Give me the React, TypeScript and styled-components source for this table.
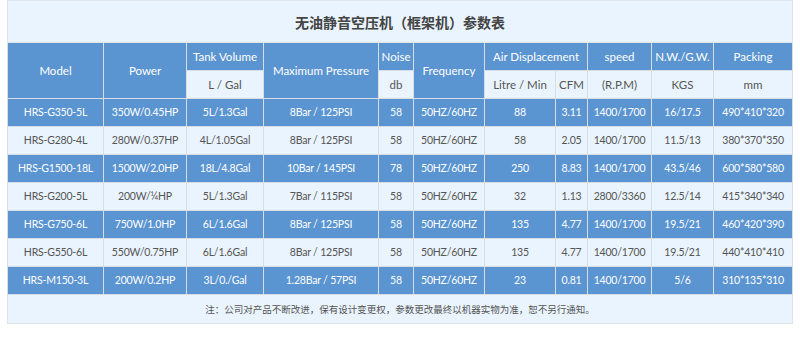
import React from "react";
import styled, { createGlobalStyle } from "styled-components";

const Global = createGlobalStyle`
  html, body { margin: 0; padding: 0; background: #fff; }
  body { font-family: Lato, "Noto Sans CJK SC", sans-serif; }
`;

const Wrap = styled.div`
  padding: 0 8px 0 7px;
`;

const Table = styled.table`
  width: 785px;
  border-collapse: collapse;
  table-layout: fixed;
  background: #eaf4fe;
  border: 1px solid #dfe4ea;
`;

const Title = styled.th`
  height: 41px;
  padding: 0;
  font-family: "Noto Sans CJK SC", sans-serif;
  font-size: 14px;
  font-weight: 700;
  color: #444;
  background: #eaf4fe;
  border: 1px solid #dfe4ea;
`;

const Cell = styled.td<{ $blue?: boolean; $head?: boolean }>`
  height: 27px;
  padding: 0;
  text-align: center;
  font-size: ${(p) => (p.$head ? "11.5px" : "10.5px")};
  letter-spacing: ${(p) => (p.$head ? "0" : "-0.2px")};
  line-height: 1;
  white-space: nowrap;
  color: ${(p) => (p.$blue ? "#ffffff" : "#555")};
  background: ${(p) => (p.$blue ? "#5a94d1" : "#eaf4fe")};
  border: 1px solid #d6dde6;
`;

const Note = styled.td`
  height: 28px;
  padding: 0;
  text-align: center;
  font-family: "Noto Sans CJK SC", sans-serif;
  font-size: 9.5px;
  color: #555;
  background: #eaf4fe;
  border: 1px solid #dfe4ea;
`;

const widths = [96, 83, 77, 115, 35, 71, 71, 32, 64, 62, 79];

const rows: string[][] = [
  ["HRS-G350-5L", "350W/0.45HP", "5L/1.3Gal", "8Bar / 125PSI", "58", "50HZ/60HZ", "88", "3.11", "1400/1700", "16/17.5", "490*410*320"],
  ["HRS-G280-4L", "280W/0.37HP", "4L/1.05Gal", "8Bar / 125PSI", "58", "50HZ/60HZ", "58", "2.05", "1400/1700", "11.5/13", "380*370*350"],
  ["HRS-G1500-18L", "1500W/2.0HP", "18L/4.8Gal", "10Bar / 145PSI", "78", "50HZ/60HZ", "250", "8.83", "1400/1700", "43.5/46", "600*580*580"],
  ["HRS-G200-5L", "200W/¼HP", "5L/1.3Gal", "7Bar / 115PSI", "58", "50HZ/60HZ", "32", "1.13", "2800/3360", "12.5/14", "415*340*340"],
  ["HRS-G750-6L", "750W/1.0HP", "6L/1.6Gal", "8Bar / 125PSI", "58", "50HZ/60HZ", "135", "4.77", "1400/1700", "19.5/21", "460*420*390"],
  ["HRS-G550-6L", "550W/0.75HP", "6L/1.6Gal", "8Bar / 125PSI", "58", "50HZ/60HZ", "135", "4.77", "1400/1700", "19.5/21", "440*410*410"],
  ["HRS-M150-3L", "200W/0.2HP", "3L/0./Gal", "1.28Bar / 57PSI", "58", "50HZ/60HZ", "23", "0.81", "1400/1700", "5/6", "310*135*310"],
];

export default function App() {
  return (
    <Wrap>
      <Global />
      <Table>
        <colgroup>
          {widths.map((w, i) => (
            <col key={i} style={{ width: w }} />
          ))}
        </colgroup>
        <thead>
          <tr>
            <Title colSpan={11}>无油静音空压机（框架机）参数表</Title>
          </tr>
        </thead>
        <tbody>
          <tr>
            <Cell $head $blue rowSpan={2}>Model</Cell>
            <Cell $head $blue rowSpan={2}>Power</Cell>
            <Cell $head $blue>Tank Volume</Cell>
            <Cell $head $blue rowSpan={2}>Maximum Pressure</Cell>
            <Cell $head $blue>Noise</Cell>
            <Cell $head $blue rowSpan={2}>Frequency</Cell>
            <Cell $head $blue colSpan={2}>Air Displacement</Cell>
            <Cell $head $blue>speed</Cell>
            <Cell $head $blue>N.W./G.W.</Cell>
            <Cell $head $blue>Packing</Cell>
          </tr>
          <tr>
            <Cell $head>L / Gal</Cell>
            <Cell $head>db</Cell>
            <Cell $head>Litre / Min</Cell>
            <Cell $head>CFM</Cell>
            <Cell $head>(R.P.M)</Cell>
            <Cell $head>KGS</Cell>
            <Cell $head>mm</Cell>
          </tr>
          {rows.map((r, i) => (
            <tr key={i}>
              {r.map((v, j) => (
                <Cell key={j} $blue={i % 2 === 0}>
                  {v}
                </Cell>
              ))}
            </tr>
          ))}
          <tr>
            <Note colSpan={11}>
              注：公司对产品不断改进，保有设计变更权，参数更改最终以机器实物为准，恕不另行通知。
            </Note>
          </tr>
        </tbody>
      </Table>
    </Wrap>
  );
}
